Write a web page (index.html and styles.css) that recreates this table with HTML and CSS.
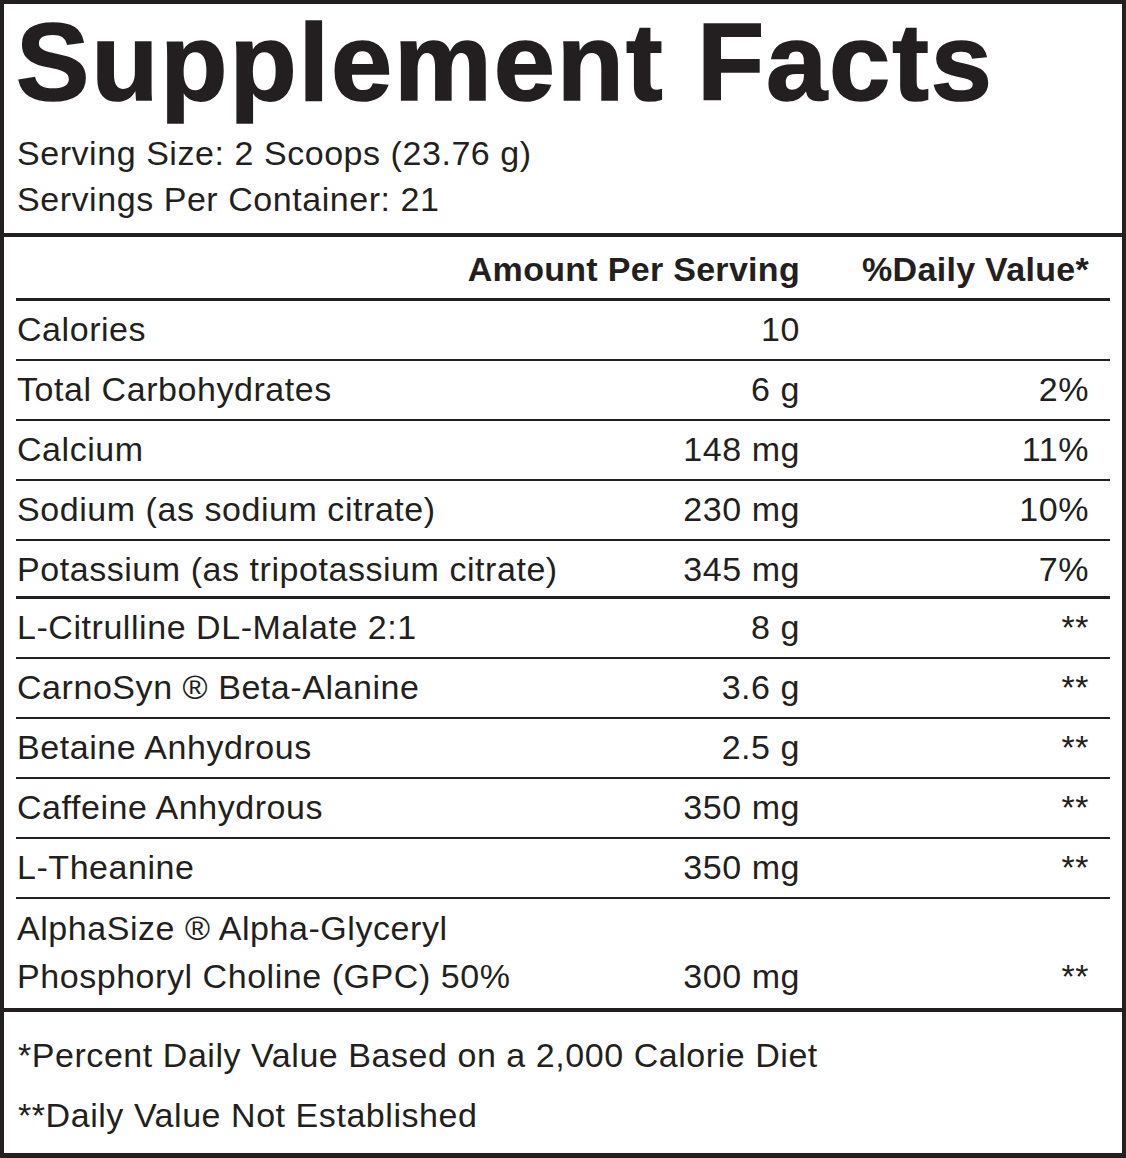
FILE: index.html
```html
<!DOCTYPE html>
<html lang="en">
<head>
<meta charset="utf-8">
<title>Supplement Facts</title>
<link rel="stylesheet" href="styles.css">
</head>
<body>
<div class="label">
  <header class="top">
    <h1 class="title">Supplement Facts</h1>
    <p class="serving">Serving Size: 2 Scoops (23.76 g)</p>
    <p class="serving">Servings Per Container: 21</p>
  </header>
  <section class="table">
    <div class="row head">
      <span class="name"></span>
      <span class="amt">Amount Per Serving</span>
      <span class="dv">%Daily Value*</span>
    </div>
    <div class="row"><span class="name">Calories</span><span class="amt">10</span><span class="dv"></span></div>
    <div class="row"><span class="name">Total Carbohydrates</span><span class="amt">6 g</span><span class="dv">2%</span></div>
    <div class="row"><span class="name">Calcium</span><span class="amt">148 mg</span><span class="dv">11%</span></div>
    <div class="row"><span class="name">Sodium (as sodium citrate)</span><span class="amt">230 mg</span><span class="dv">10%</span></div>
    <div class="row thick"><span class="name">Potassium (as tripotassium citrate)</span><span class="amt">345 mg</span><span class="dv">7%</span></div>
    <div class="row"><span class="name">L-Citrulline DL-Malate 2:1</span><span class="amt">8 g</span><span class="dv">**</span></div>
    <div class="row"><span class="name">CarnoSyn ® Beta-Alanine</span><span class="amt">3.6 g</span><span class="dv">**</span></div>
    <div class="row"><span class="name">Betaine Anhydrous</span><span class="amt">2.5 g</span><span class="dv">**</span></div>
    <div class="row"><span class="name">Caffeine Anhydrous</span><span class="amt">350 mg</span><span class="dv">**</span></div>
    <div class="row"><span class="name">L-Theanine</span><span class="amt">350 mg</span><span class="dv">**</span></div>
    <div class="row tall"><span class="name">AlphaSize ® Alpha-Glyceryl<br>Phosphoryl Choline (GPC) 50%</span><span class="amt">300 mg</span><span class="dv">**</span></div>
  </section>
  <footer class="foot">
    <p class="note">*Percent Daily Value Based on a 2,000 Calorie Diet</p>
    <p class="note">**Daily Value Not Established</p>
  </footer>
</div>
</body>
</html>
```
FILE: styles.css
```css
* { box-sizing: border-box; }
html, body { margin: 0; padding: 0; background: #ffffff; }
body {
  font-family: "Liberation Sans", Arial, sans-serif;
  color: #231f20;
}
.label {
  width: 1126px;
  height: 1158px;
  border: 4px solid #231f20;
  border-bottom-width: 5px;
  display: flex;
  flex-direction: column;
  background: #fff;
  letter-spacing: 0.55px;
}
.top {
  border-bottom: 4px solid #231f20;
  padding-bottom: 11px;
}
.title {
  margin: 0;
  padding: 2px 0 0 12px;
  font-size: 110px;
  line-height: 112px;
  font-weight: 700;
  letter-spacing: 1.9px;
  -webkit-text-stroke: 1.6px #231f20;
  white-space: nowrap;
}
.serving {
  margin: 0;
  padding-left: 13px;
  font-size: 34px;
  line-height: 46px;
}
.title + .serving { margin-top: 12px; }
.table {
  padding: 0 12px;
  flex: 1;
  display: flex;
  flex-direction: column;
}
.row {
  display: flex;
  height: 60px;
  border-bottom: 2px solid #231f20;
  font-size: 34px;
  line-height: 57px;
  padding-bottom: 1px;
}
.row.head {
  height: 64px;
  padding-top: 4px;
  padding-bottom: 0;
  border-bottom-width: 3px;
  font-weight: 700;
  letter-spacing: 0.3px;
}
.row.head .amt {
  width: auto;
}
.row.thick {
  height: 58px;
  border-bottom-width: 3px;
}
.row.tall {
  flex: 1;
  height: auto;
  border-bottom: none;
  line-height: 48px;
  padding-top: 5px;
  padding-bottom: 8px;
  align-items: flex-end;
}
.name {
  flex: 1;
  padding-left: 1px;
  white-space: nowrap;
}
.amt {
  width: 220px;
  text-align: right;
  white-space: nowrap;
}
.dv {
  width: 310px;
  padding-right: 21px;
  text-align: right;
  white-space: nowrap;
}
.foot {
  border-top: 4px solid #231f20;
  padding: 13px 0 8px 14px;
}
.note {
  margin: 0;
  font-size: 34px;
  line-height: 60px;
}
```
